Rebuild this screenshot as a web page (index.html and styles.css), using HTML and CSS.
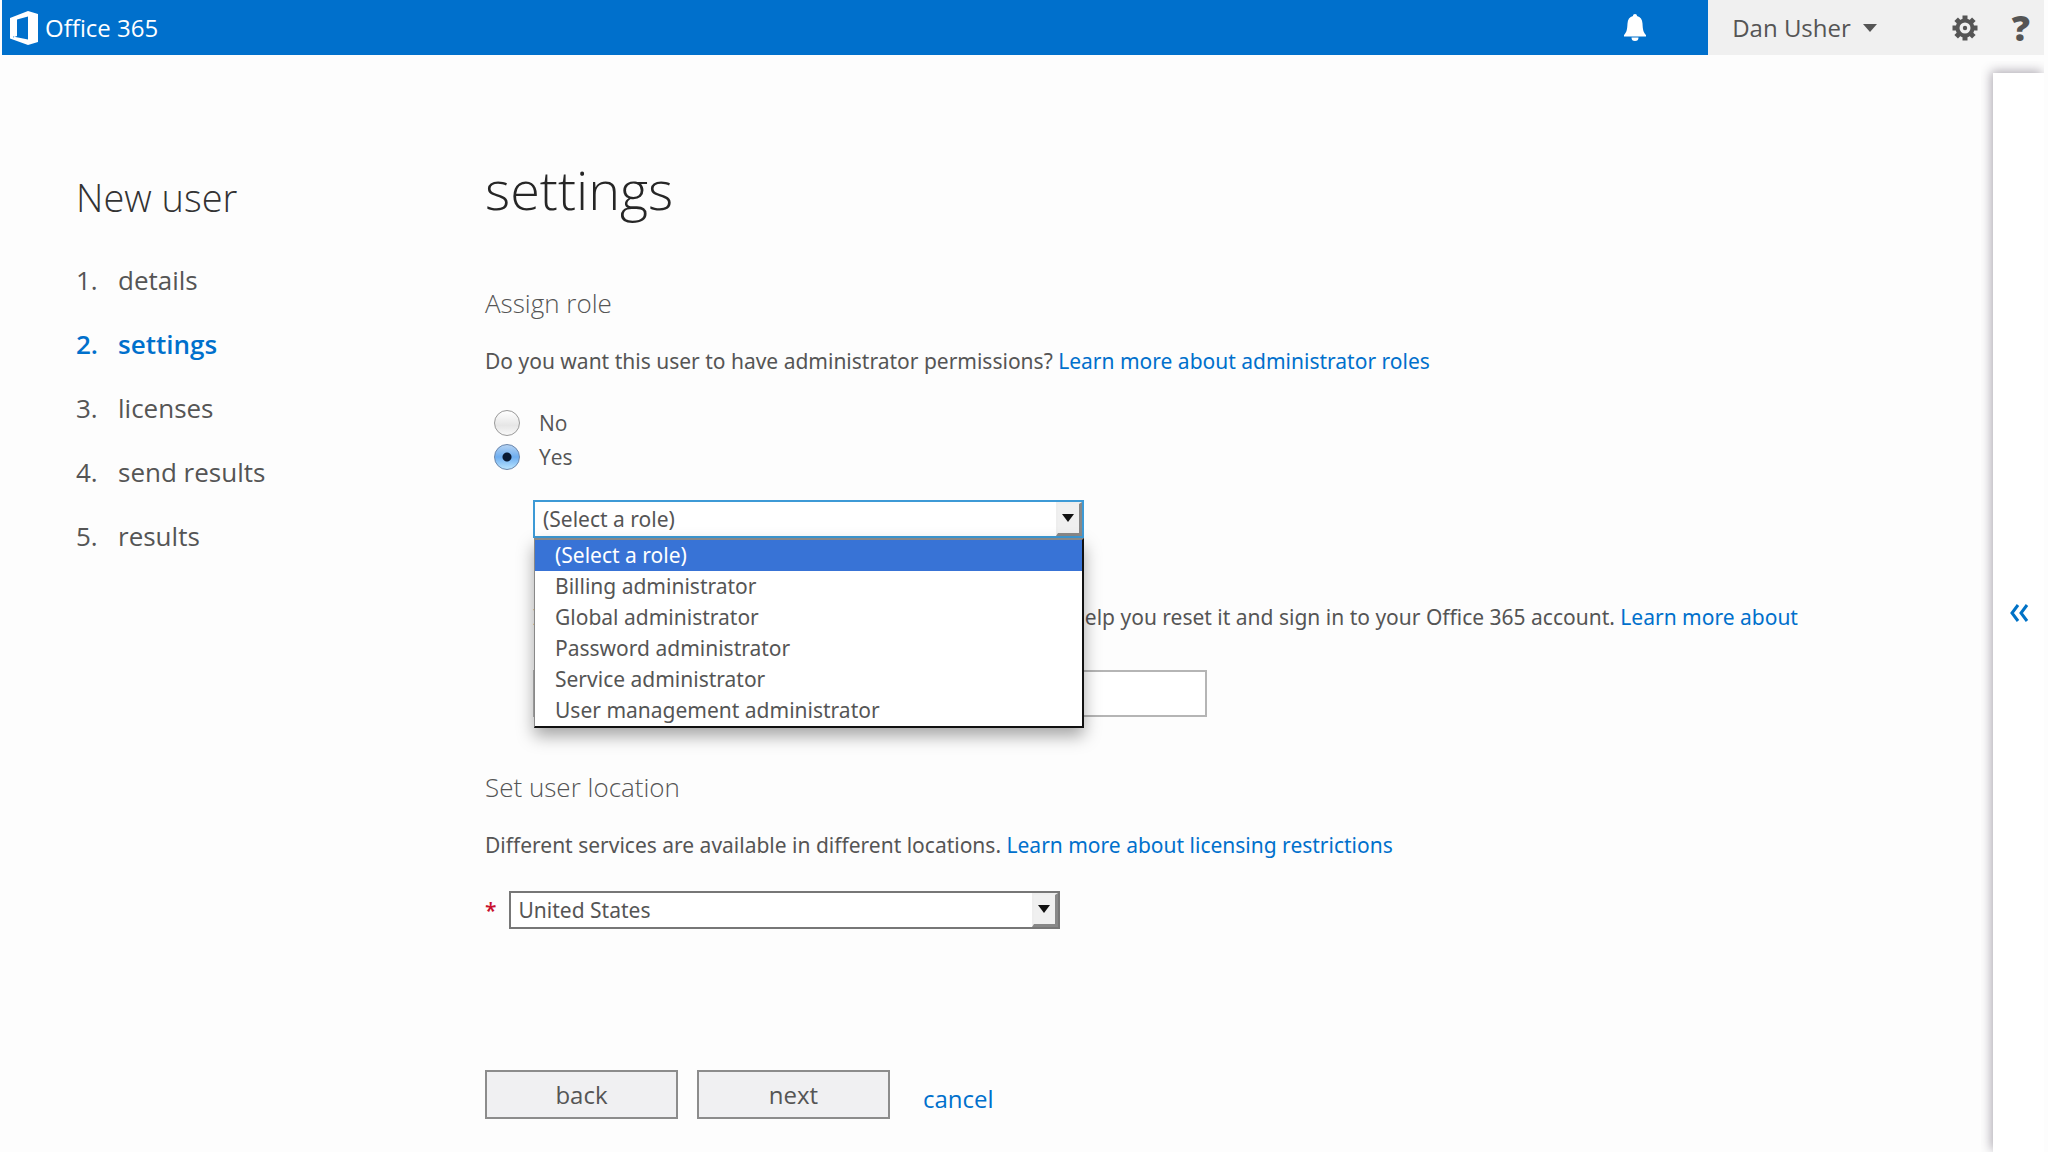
FILE: index.html
```
<!DOCTYPE html>
<html lang="en">
<head>
  <meta charset="UTF-8">
  <meta name="viewport" content="width=device-width, initial-scale=1.0">
  <title>New user - Office 365</title>
  <link rel="stylesheet" href="styles.css">
</head>
<body>

  <header class="topbar">
    <a class="brand" href="#">
      <svg class="brand-logo" viewBox="0 0 28 34" aria-hidden="true">
        <path fill="#fff" fill-rule="evenodd" d="M0 7 L18 0 L28 3 V31 L18 34 L0 27.500 Z M3 9 V25.500 L18 28.500 V5.500 L7 8.500 V25 L3 26.500 Z"/>
      </svg>
      <span>Office 365</span>
    </a>
    <button type="button" class="bell" aria-label="Notifications">
      <svg width="22" height="28" viewBox="0 0 22 28" aria-hidden="true">
        <path fill="#fff" d="M11 0c1.300 0 2 .9 2 2 3.500.9 5.300 3.600 5.500 7.500.3 6 .8 8.500 3.500 11.500v1.500H0V21c2.700-3 3.200-5.500 3.500-11.500C3.700 5.600 5.500 2.900 9 2c0-1.100.7-2 2-2zM7.500 23.500h7a3.500 3.500 0 0 1-7 0z"/>
      </svg>
    </button>
    <div class="account">
      <button type="button" class="account-name">Dan Usher
        <svg width="14" height="8" viewBox="0 0 14 8" aria-hidden="true"><path fill="#555" d="M0 0h14L7 8z"/></svg>
      </button>
      <button type="button" class="account-icon" aria-label="Settings">
        <svg width="26" height="26" viewBox="-13 -13 26 26" aria-hidden="true">
          <g fill="#555">
            <rect x="-2.500" y="-12.500" width="5" height="25"/>
            <rect x="-2.500" y="-12.500" width="5" height="25" transform="rotate(45)"/>
            <rect x="-2.500" y="-12.500" width="5" height="25" transform="rotate(90)"/>
            <rect x="-2.500" y="-12.500" width="5" height="25" transform="rotate(135)"/>
            <circle r="9.500"/>
          </g>
          <circle r="5.500" fill="#f0f0f0"/>
          <circle r="2.200" fill="#555"/>
        </svg>
      </button>
      <button type="button" class="account-icon help" aria-label="Help">?</button>
    </div>
  </header>

  <div class="page">
    <nav class="steps">
      <h2>New user</h2>
      <ol>
        <li><span class="num">1.</span>details</li>
        <li class="active"><span class="num">2.</span>settings</li>
        <li><span class="num">3.</span>licenses</li>
        <li><span class="num">4.</span>send results</li>
        <li><span class="num">5.</span>results</li>
      </ol>
    </nav>

    <main class="content">
      <h1>settings</h1>

      <form>
        <h3>Assign role</h3>
        <p class="text">Do you want this user to have administrator permissions? <a href="#">Learn more about administrator roles</a></p>

        <div class="radios">
          <label><input type="radio" name="admin" value="no">No</label>
          <label><input type="radio" name="admin" value="yes" checked>Yes</label>
        </div>

        <div class="role-fields">
          <div class="dropdown open">
            <select id="role" aria-label="Role">
              <option>(Select a role)</option>
              <option>Billing administrator</option>
              <option>Global administrator</option>
              <option>Password administrator</option>
              <option>Service administrator</option>
              <option>User management administrator</option>
            </select>
            <span class="arrow"></span>
            <ul class="menu" role="listbox" aria-label="Role">
              <li class="selected" role="option" aria-selected="true">(Select a role)</li>
              <li role="option">Billing administrator</li>
              <li role="option">Global administrator</li>
              <li role="option">Password administrator</li>
              <li role="option">Service administrator</li>
              <li role="option">User management administrator</li>
            </ul>
          </div>
          <p class="text hint">If a user password is ever lost, this alternate email can help you reset it and sign in to your Office 365 account. <a href="#">Learn more about</a></p>
          <input type="email" class="email" aria-label="Alternate email address">
        </div>

        <h3>Set user location</h3>
        <p class="text">Different services are available in different locations. <a href="#">Learn more about licensing restrictions</a></p>

        <div class="location">
          <label class="required" for="location">*</label>
          <div class="dropdown">
            <select id="location">
              <option>United States</option>
            </select>
            <span class="arrow"></span>
          </div>
        </div>

        <div class="actions">
          <button type="button">back</button>
          <button type="button">next</button>
          <a href="#">cancel</a>
        </div>
      </form>
    </main>

    <aside class="side">
      <button type="button" aria-label="Expand help pane">
        <svg width="20" height="18" viewBox="0 0 20 18" aria-hidden="true">
          <path d="M9 1 3 9l6 8M18 1l-6 8 6 8" fill="none" stroke="#0072c6" stroke-width="3"/>
        </svg>
      </button>
    </aside>
  </div>

</body>
</html>
```
FILE: styles.css
```
* {
  box-sizing: border-box;
}

body {
  font-family: "Open Sans", "Noto Sans", sans-serif;
  font-size: 21px;
  line-height: 32px;
  color: #555;
  background-color: #fdfdfd;
  margin: 0;
  padding: 0 4px 0 2px;
  min-height: 100vh;
  display: flex;
  flex-direction: column;
}

h1, h2, h3, p, ul, ol {
  margin: 0;
  padding: 0;
  font-weight: 300;
}

ul, ol {
  list-style: none;
}

a {
  color: #0070cc;
  text-decoration: none;
}

button, input, select {
  font: inherit;
  color: inherit;
}

/* top bar */
.topbar {
  display: flex;
  align-items: stretch;
  height: 55px;
  background-color: #0070cc;
}

.brand {
  display: flex;
  align-items: center;
  gap: 7px;
  padding-left: 8px;
  font-size: 24px;
  color: #fff;
  margin-right: auto;
}

.brand-logo {
  width: 28px;
  height: 34px;
}

.topbar button {
  display: flex;
  align-items: center;
  padding: 0;
  border: none;
  background: none;
  cursor: pointer;
}

.bell {
  margin-right: 62px;
}

.account {
  display: flex;
  align-items: center;
  background-color: #f0f0f0;
  padding: 0 14px 0 24px;
}

.account-name {
  gap: 12px;
  font-size: 24px;
  margin-right: 75px;
}

.account-icon {
  margin-right: 34px;
}

.account .help {
  font-size: 36px;
  font-weight: 800;
  margin-right: 0;
}

/* columns */
.page {
  flex: 1;
  display: flex;
}

.steps {
  flex: 0 0 483px;
  padding: 115px 0 0 74px;
}

.steps h2 {
  font-size: 38px;
  line-height: 54px;
  color: #333;
  margin-bottom: 24px;
}

.steps li {
  font-size: 26px;
  line-height: 64px;
  font-weight: 400;
}

.steps .num {
  display: inline-block;
  width: 42px;
}

.steps .active {
  color: #0070cc;
  font-weight: 600;
}

.content {
  flex: 1;
  padding: 94px 160px 0 0;
}

h1 {
  font-size: 54px;
  line-height: 80px;
  color: #262626;
  margin-bottom: 54px;
}

h3 {
  font-size: 26px;
  line-height: 40px;
  color: #555;
  margin-bottom: 22px;
}

.text, .dropdown {
  font-family: "Noto Sans", "Open Sans", sans-serif;
  font-weight: 400;
}

/* form */
.radios {
  padding: 29px 0 0 9px;
}

.radios label {
  display: flex;
  align-items: center;
  gap: 19px;
  line-height: 34px;
}

.radios input {
  appearance: none;
  width: 26px;
  height: 26px;
  margin: 0;
  border: 1px solid #999;
  border-radius: 50%;
  background: linear-gradient(#fff, #e6e6e6 60%, #f8f8f8);
}

.radios input:checked {
  border-color: #6a86ab;
  background: radial-gradient(circle, #0a1a33 4px, transparent 5px), linear-gradient(#b5d3f3, #6eaef0 50%, #b8e4ff);
}

.role-fields {
  padding: 26px 0 50px 48px;
}

.dropdown {
  position: relative;
  width: 551px;
}

.dropdown select {
  appearance: none;
  display: block;
  width: 100%;
  height: 38px;
  padding: 0 40px 0 8px;
  border: 2px solid #777;
  border-radius: 0;
  background-color: #fff;
}

.dropdown.open select {
  border-color: #3d9ad6;
}

.arrow {
  position: absolute;
  top: 2px;
  right: 2px;
  bottom: 2px;
  width: 26px;
  border: 2px solid #eee;
  border-right: 3px solid #888;
  border-bottom: 3px solid #888;
  background-color: #f0f0f0;
  pointer-events: none;
}

.arrow::after {
  content: "";
  position: absolute;
  left: 4px;
  top: 10px;
  border: 6px solid transparent;
  border-top: 8px solid #111;
  border-bottom: none;
}

.menu {
  position: absolute;
  z-index: 1;
  top: 100%;
  left: 1px;
  right: 0;
  border: 2px solid #111;
  border-top-color: #888;
  border-left: 1px solid #888;
  background-color: #fff;
  box-shadow: 0 8px 16px rgba(0, 0, 0, 0.35);
}

.menu li {
  padding-left: 20px;
  font-weight: 400;
  line-height: 31px;
}

.menu .selected {
  background-color: #3873d6;
  color: #fff;
}

.hint {
  padding-top: 63px;
}

.email {
  display: block;
  width: 674px;
  height: 47px;
  margin-top: 37px;
  padding: 0 8px;
  border: 2px solid #b5b5b5;
  background-color: #fff;
}

.location {
  display: flex;
  align-items: center;
  gap: 12px;
  margin-top: 30px;
}

.required {
  color: #c8102e;
  font-weight: 600;
}

.actions {
  display: flex;
  align-items: center;
  gap: 19px;
  margin-top: 141px;
  font-size: 24px;
}

.actions button {
  width: 193px;
  height: 49px;
  padding: 0;
  border: 2px solid #8c8c8c;
  background-color: #f0f0f2;
  cursor: pointer;
}

.actions a {
  padding: 8px 0 0 14px;
}

/* collapsed help pane */
.side {
  flex: 0 0 51px;
  display: flex;
  align-items: center;
  justify-content: center;
  margin-top: 18px;
  background-color: #fff;
  box-shadow: -2px -2px 10px rgba(60, 50, 70, 0.4);
  clip-path: inset(-12px 0 0 -12px);
}

.side button {
  display: flex;
  padding: 0;
  border: none;
  background: none;
  cursor: pointer;
}
```
